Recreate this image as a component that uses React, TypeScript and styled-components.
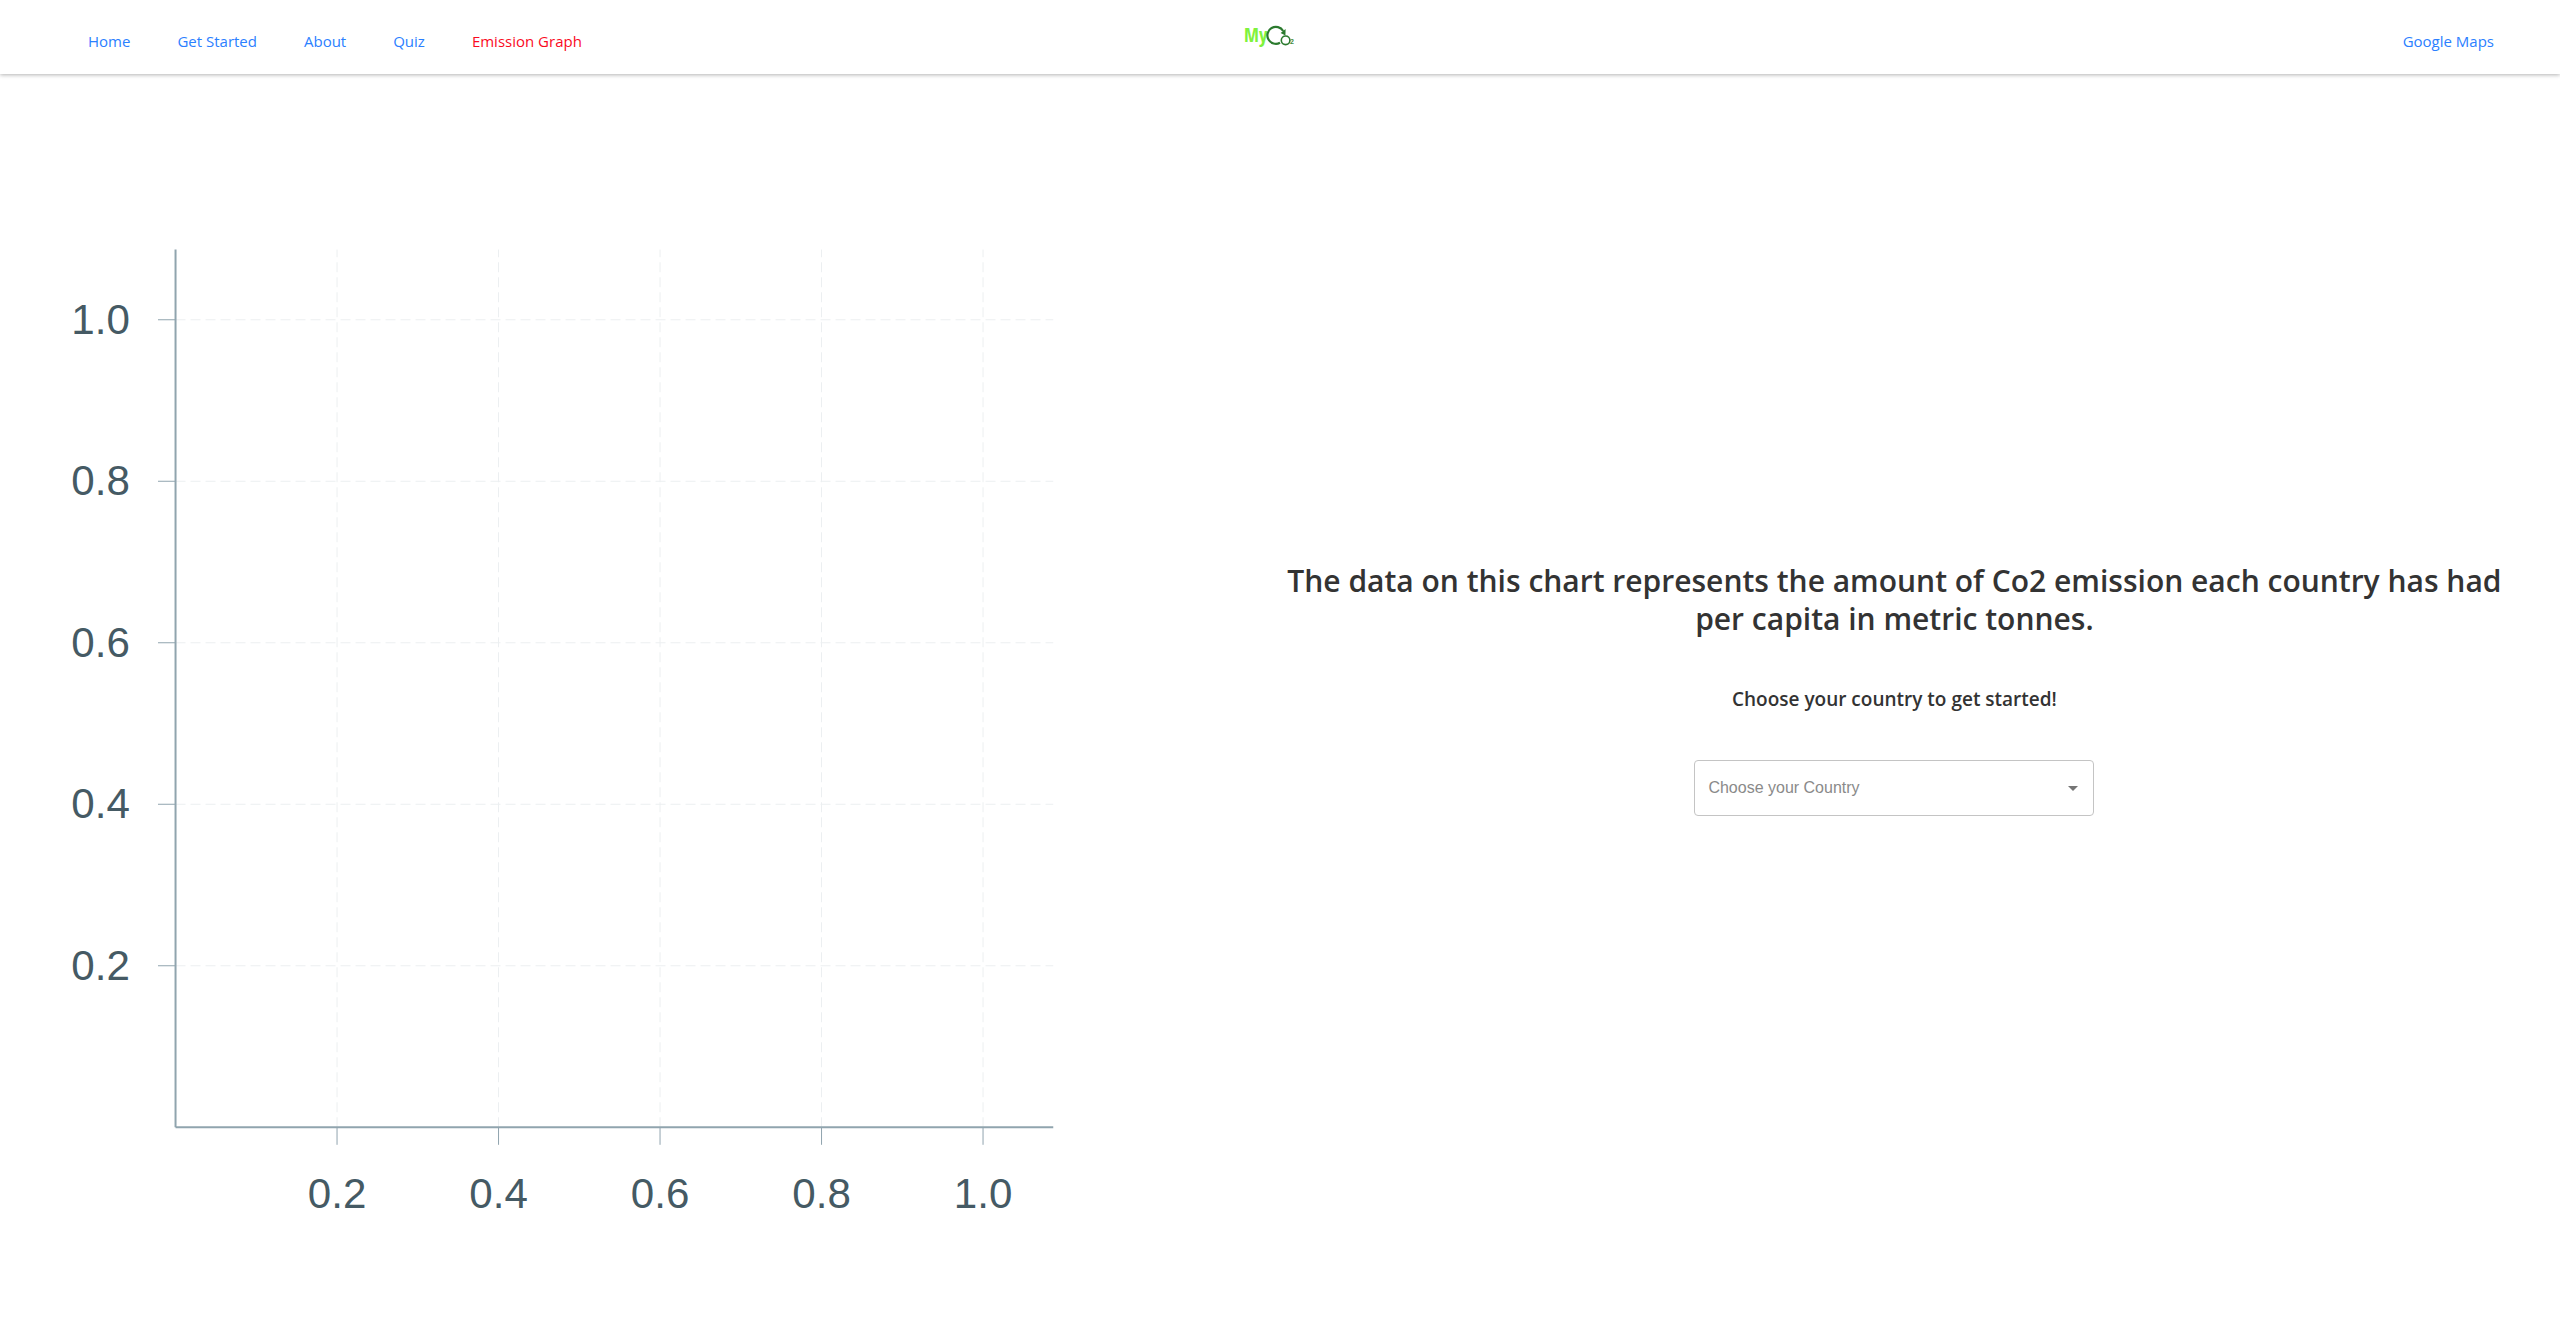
import React, { useState } from "react";
import styled, { createGlobalStyle } from "styled-components";

const sans = `"Open Sans", "Noto Sans", sans-serif`;

const GlobalStyle = createGlobalStyle`
  *, *::before, *::after { box-sizing: border-box; }
  body { margin: 0; background: #fff; font-family: ${sans}; color: #333; }
`;

const Header = styled.header`
  display: grid;
  grid-template-columns: 1fr auto 1fr;
  align-items: center;
  height: 74px;
  padding: 8px 66px 0;
  background: #fff;
  box-shadow: 0 1px 4px rgba(0, 0, 0, 0.3);
`;

const Nav = styled.nav<{ $end?: boolean }>`
  display: flex;
  gap: 47px;
  padding-left: 22px;
  justify-content: ${(p) => (p.$end ? "flex-end" : "flex-start")};
`;

const NavLink = styled.a<{ $active?: boolean }>`
  font-size: 15px;
  line-height: 24px;
  text-decoration: none;
  white-space: nowrap;
  color: ${(p) => (p.$active ? "#fa0a1e" : "#2b80ff")};
`;

const LogoLink = styled.a`
  display: flex;
`;

const LogoWord = styled.text`
  font: bold 19px "Liberation Sans Narrow", "Open Sans Condensed", "DejaVu Sans Condensed", sans-serif;
  fill: #80f23c;
`;

const LogoSub = styled.text`
  font: bold 7px "Liberation Sans", Arial, sans-serif;
  fill: #3f8a40;
`;

const Main = styled.main`
  display: flex;
  align-items: center;
`;

const ChartPane = styled.section`
  width: 48%;
`;

const ChartSvg = styled.svg`
  display: block;
  width: 100%;
  height: auto;
`;

const Line = styled.line`
  vector-effect: non-scaling-stroke;
  stroke: #90a4ae;
`;

const AxisLine = styled(Line)`
  stroke-width: 2px;
`;

const GridLine = styled(Line)`
  stroke: #eceff1;
  stroke-dasharray: 10, 5;
`;

const TickLabel = styled.text`
  font: 12px "Liberation Sans", Helvetica, Arial, sans-serif;
  fill: #455a64;
`;

const InfoPane = styled.section`
  flex: 1;
  display: flex;
  flex-direction: column;
  align-items: center;
  padding: 1px 32px 0;
  text-align: center;
`;

const Title = styled.h1`
  margin: 0;
  font-size: 30px;
  font-weight: 600;
  line-height: 38px;
`;

const Subtitle = styled.h2`
  margin: 49px 0;
  font-size: 19px;
  font-weight: 600;
  line-height: 24px;
`;

const SelectBox = styled.div`
  display: grid;
  align-items: center;
  width: 400px;
  max-width: 100%;
`;

const Select = styled.select`
  grid-area: 1 / 1;
  appearance: none;
  width: 100%;
  height: 56px;
  padding: 0 39px 0 13px;
  border: 1px solid #c4c4c4;
  border-radius: 4px;
  background: #fff;
  color: #8a8a8a;
  font: 16px "Liberation Sans", Arial, sans-serif;
`;

const Arrow = styled.svg`
  grid-area: 1 / 1;
  justify-self: end;
  width: 24px;
  height: 24px;
  margin-right: 9px;
  fill: #757575;
  pointer-events: none;
`;

const links = ["Home", "Get Started", "About", "Quiz", "Emission Graph"];
const ticks = [0.2, 0.4, 0.6, 0.8, 1];
const countries = ["Australia", "Brazil", "Canada", "China", "France", "Germany", "India", "Japan", "United Kingdom", "United States"];

const START = 50;
const END = 300;
const UNIT = 230;

function Logo() {
  return (
    <svg width="80" height="48" viewBox="0 -8 80 48" role="img" aria-label="MyCo2">
      <LogoWord x="4" y="17">My</LogoWord>
      <g fill="none" stroke="#2b7a2e">
        <path d="M40 17.8A8.5 8.5 0 1 1 43.2 6" strokeWidth="2.2" />
        <circle cx="45.6" cy="15.3" r="4.3" strokeWidth="1.6" />
      </g>
      <path d="M40.6 8L45.6 4L45.4 10.4Z" fill="#2b7a2e" />
      <LogoSub x="50" y="19">2</LogoSub>
    </svg>
  );
}

function EmissionChart() {
  return (
    <ChartSvg viewBox="0 0 350 350" role="img" aria-label="Emission graph">
      {ticks.map((t) => {
        const x = START + t * UNIT;
        const y = END - t * UNIT;
        return (
          <g key={t}>
            <GridLine x1={x} y1={END} x2={x} y2={START} />
            <GridLine x1={START} y1={y} x2={END} y2={y} />
            <Line x1={x} y1={END} x2={x} y2={END + 5} />
            <Line x1={START} y1={y} x2={START - 5} y2={y} />
            <TickLabel x={x} y={END + 23} textAnchor="middle">{t.toFixed(1)}</TickLabel>
            <TickLabel x={START - 13} y={y + 4} textAnchor="end">{t.toFixed(1)}</TickLabel>
          </g>
        );
      })}
      <AxisLine x1={START} y1={END} x2={END} y2={END} />
      <AxisLine x1={START} y1={START} x2={START} y2={END} />
    </ChartSvg>
  );
}

export default function App() {
  const [country, setCountry] = useState("");
  return (
    <>
      <GlobalStyle />
      <Header>
        <Nav>
          {links.map((l) => (
            <NavLink key={l} href="#" $active={l === "Emission Graph"}>{l}</NavLink>
          ))}
        </Nav>
        <LogoLink href="#"><Logo /></LogoLink>
        <Nav $end>
          <NavLink href="#">Google Maps</NavLink>
        </Nav>
      </Header>
      <Main>
        <ChartPane><EmissionChart /></ChartPane>
        <InfoPane>
          <Title>
            The data on this chart represents the amount of Co2 emission each country has had per capita in metric tonnes.
          </Title>
          <Subtitle>Choose your country to get started!</Subtitle>
          <SelectBox>
            <Select aria-label="Choose your Country" value={country} onChange={(e) => setCountry(e.target.value)}>
              <option value="" disabled>Choose your Country</option>
              {countries.map((c) => <option key={c}>{c}</option>)}
            </Select>
            <Arrow viewBox="0 0 24 24" aria-hidden="true"><path d="M7 10l5 5 5-5z" /></Arrow>
          </SelectBox>
        </InfoPane>
      </Main>
    </>
  );
}
